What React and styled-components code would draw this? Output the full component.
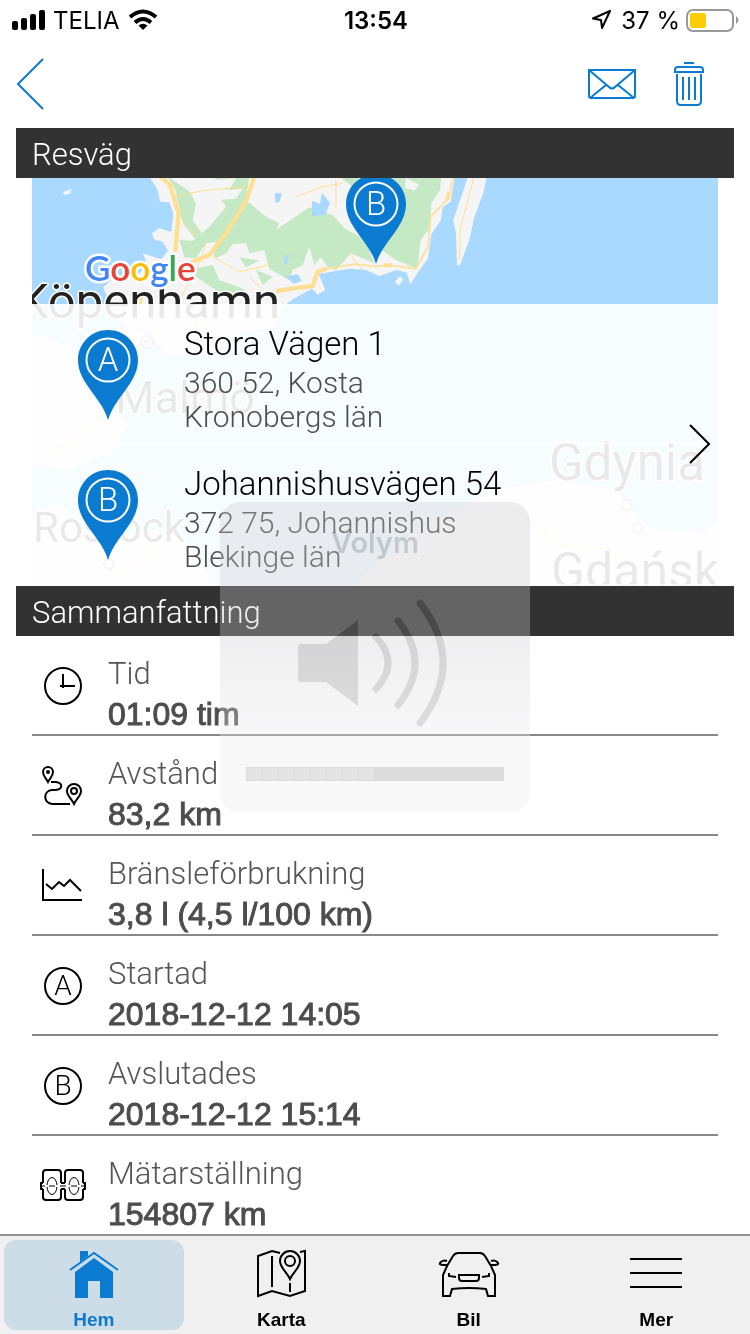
import React from 'react';
import styled, { createGlobalStyle } from 'styled-components';


const BLUE = '#0a7bd1';
const LIGHT_FONT = `Roboto, 'Liberation Sans', sans-serif`;
const MEDIUM_FONT = `'Liberation Sans', Arial, sans-serif`;


const GlobalStyle = createGlobalStyle`
    * {
        box-sizing: border-box;
    }

    body {
        margin: 0;
        background: #fff;
        color: #000;
        font-family: ${LIGHT_FONT};
        font-weight: 300;
    }

    svg {
        display: block;
    }
`;

const Page = styled.div`
    position: relative;
    display: flex;
    flex-direction: column;
    min-height: 100vh;
`;

// STATUS BAR
const StatusBar = styled.div`
    display: grid;
    grid-template-columns: 1fr auto 1fr;
    align-items: center;
    height: 40px;
    padding: 0 10px 0 12px;
    font-family: Inter, sans-serif;
    font-size: 24px;
    font-weight: 400;
`;

const StatusGroup = styled.div`
    display: flex;
    align-items: center;
    justify-content: ${props => props.$end ? 'flex-end' : 'flex-start'};
    gap: ${props => props.$end ? '6px' : '8px'};
`;

const Clock = styled.time`
    font-weight: 600;
`;

// TOOLBAR
const Toolbar = styled.header`
    display: flex;
    align-items: center;
    gap: 36px;
    height: 88px;
    padding: 0 45px 0 16px;
`;

const IconButton = styled.button`
    margin-right: ${props => props.$push ? 'auto' : '0'};
    padding: 0;
    border: 0;
    background: none;
    color: ${BLUE};
`;

// SECTIONS
const Main = styled.main`
    flex: 1;
    padding: 0 16px;
`;

const SectionTitle = styled.h2`
    height: 50px;
    margin: 0;
    padding: 0 16px;
    background: #323232;
    color: #fff;
    font-size: 31px;
    font-weight: 300;
    line-height: 54px;
`;

const MapPanel = styled.div`
    position: relative;
    margin: 0 16px;
    padding-top: 126px;
    overflow: hidden;
`;

const MapDrawing = styled.svg`
    position: absolute;
    top: 0;
    left: 0;
    width: 100%;
    height: 100%;
`;

const RouteLink = styled.a`
    position: relative;
    display: block;
    background: rgba(255, 255, 255, 0.9);
    color: #4d4d4d;
    text-decoration: none;
`;

const RouteArrow = styled.span`
    position: absolute;
    top: 120px;
    right: 8px;
    color: #000;
`;

const Stop = styled.div`
    display: flex;
    gap: 46px;
    height: 140px;
    padding: 26px 46px 0;
    border-bottom: 2px solid rgba(255, 255, 255, 0.6);

    &:last-of-type {
        height: 142px;
    }
`;

const Address = styled.div`
    font-size: 30px;
    line-height: 34px;
`;

const Street = styled.div`
    margin-bottom: 8px;
    color: #000;
    font-size: 33px;
    line-height: 28px;
`;

const SummaryList = styled.ul`
    margin: 0 16px;
    padding: 0;
    list-style: none;
`;

const SummaryItem = styled.li`
    display: flex;
    gap: 14px;
    height: 100px;
    padding-top: 18px;
    border-bottom: 2px solid #888;

    &:last-child {
        height: 98px;
        border-bottom: 0;
    }
`;

const ItemIcon = styled.span`
    width: 62px;
    padding-top: 12px;
    color: #000;
`;

const ItemLabel = styled.div`
    color: #555;
    font-size: 31px;
    line-height: 40px;
`;

const ItemValue = styled.div`
    color: #4d4d4d;
    font-family: ${MEDIUM_FONT};
    font-size: 32px;
    font-weight: 400;
    line-height: 40px;
    -webkit-text-stroke: 1px currentColor;
`;

// TABS
const TabBar = styled.nav`
    display: grid;
    grid-template-columns: repeat(4, 1fr);
    height: 100px;
    padding: 4px 0;
    border-top: 2px solid #939393;
    background: #f0f0f0;
`;

const Tab = styled.a`
    display: flex;
    flex-direction: column;
    align-items: center;
    gap: 12px;
    margin: 0 4px;
    padding-top: 8px;
    border-radius: 12px;
    background: ${props => props.$active ? '#cddde7' : 'transparent'};
    color: ${props => props.$active ? BLUE : '#000'};
    font-family: ${MEDIUM_FONT};
    font-size: 19px;
    font-weight: 700;
    line-height: 20px;
    text-decoration: none;
`;

// VOLUME OVERLAY
const VolumeHud = styled.div`
    position: absolute;
    top: 502px;
    left: 50%;
    display: flex;
    flex-direction: column;
    align-items: center;
    width: 310px;
    height: 310px;
    margin-left: -155px;
    padding: 24px 26px 0;
    border-radius: 20px;
    background: linear-gradient(rgba(202, 202, 206, 0.33) 40%, rgba(234, 234, 238, 0.33) 75%);
    pointer-events: none;
`;

const VolumeTitle = styled.div`
    color: #272420;
    font-family: Inter, sans-serif;
    font-size: 29px;
    font-weight: 600;
    line-height: 34px;
    mix-blend-mode: difference;
`;

const Speaker = styled.svg`
    margin-top: 39px;
    mix-blend-mode: difference;
`;

const VolumeBar = styled.div`
    display: flex;
    width: 100%;
    height: 14px;
    margin-top: 40px;
    padding: 1px;
    background: #dcdcdd;
`;

const VolumeStep = styled.span`
    width: 15px;
    margin-right: 1px;
    background: #e4e4e5;
`;



const Line = ({ width, height, box, stroke = 2, children }) => (
    <svg
        width={width}
        height={height}
        viewBox={box || `0 0 ${width} ${height}`}
        fill="none"
        stroke="currentColor"
        strokeWidth={stroke}
        aria-hidden="true"
    >
        {children}
    </svg>
);

const Letter = ({ x, y, size, color, children }) => (
    <text
        x={x}
        y={y}
        fill={color}
        stroke="none"
        fontFamily="Roboto, sans-serif"
        fontSize={size}
        fontWeight="300"
        textAnchor="middle"
    >
        {children}
    </text>
);

const Pin = ({ letter, ...rest }) => (
    <svg width="60" height="90" viewBox="0 0 60 90" {...rest}>
        <path d="M30 0C13.400 0 0 13.400 0 30c0 9 3.500 16.500 8 23.500C16 66 26 76 30 90c4-14 14-24 22-36.500 4.500-7 8-14.500 8-23.500C60 13.400 46.600 0 30 0Z" fill={BLUE} />
        <circle cx="30" cy="30" r="21.500" fill="none" stroke="#fff" strokeWidth="2" />
        <Letter x="30" y="41" size="33" color="#fff">{letter}</Letter>
    </svg>
);

const LetterIcon = ({ letter }) => (
    <Line width={62} height={40}>
        <circle cx="31" cy="20" r="18" />
        <Letter x="31" y="29" size="28" color="#000">{letter}</Letter>
    </Line>
);


const RouteMap = () => (
    <MapDrawing viewBox="0 0 686 408" preserveAspectRatio="xMidYMin slice" role="img" aria-label="Karta">
        <rect width="686" height="408" fill="#aad9ff" />

        {/* land and roads, drawn at three times the panel's scale */}
        <g transform="translate(-16 -8) scale(0.33333)">
            <path
                fill="#f5f5f5"
                d="M400 20 425 60 432 95 460 97 472 130 466 186 430 175 408 190 414 208 440 215 456 242 436 268
                    380 250 396 285 360 318 300 318 262 352 280 400 330 470 400 480 450 560 600 540 660 490 780 470
                    800 410 830 388 888 356 905 374 928 360 908 312 1000 296 1050 300 1090 318 1142 300 1172 308
                    1183 343 1212 298 1236 265 1246 192 1275 150 1280 112 1304 95 1316 20Z"
            />
            <path fill="#f5f5f5" d="M1356 20 1312 150 1320 190 1323 287 1332 285 1360 210 1375 140 1402 70 1412 20Z" />
            <path fill="#f5f5f5" d="m1136 335 16-16 10 10-14 18ZM140 66l28-9-8 14-14 4ZM270 490l80-20 50 30-30 50-60-10Z" />
            <path fill="#f5f5f5" d="M20 480 190 540 240 700 340 760 280 850 150 900 40 880ZM30 1060 120 1000 200 1050 320 1090 420 1080 520 1120 600 1260 30 1260Z" />
            <path fill="#f5f5f5" d="M1000 1250 1240 1060 1440 960 1620 930 1800 960 1900 1080 2060 1085 2120 1050V1300H1000Z" />
            <path
                fill="#c5e8c5"
                d="M455 20 520 64 540 100 530 150 556 186 540 210 500 160 478 60ZM490 210 530 212 580 170 630 110 596 60
                    600 20 700 20 690 90 750 140 790 160 780 180 880 112 950 135 985 175 1050 210 1075 280 1005 250
                    960 300 935 290 915 262 895 285 880 230 860 285 830 300 820 330 760 296 745 240 700 250 690 220
                    650 222 630 250 600 265 590 250 606 215 570 220 540 265 505 262Z"
            />
            <path fill="#c5e8c5" d="M1130 20 1276 20 1272 60 1246 100 1242 175 1214 210 1204 296 1140 270 1096 240 1120 160ZM970 20l60 0-20 30ZM510 300l80-15 20 45 80 30-60 20-90-60ZM670 262l60 10-40 20ZM720 300l50 20-30 25Z" />
            <path fill="#f5f5f5" d="m1170 24 20 10 20 10-14 18-30-8ZM560 90l40-60 60-6-20 36 40-4-20 30-50 4Z" />
            <path fill="#aad9ff" d="m776 70 22 0-8 26-12 2ZM888 92l24 10 6-34 24 30-14 36-40 4ZM806 260l14-10-6 30-10 2ZM810 320l34-8 14 20-24 10Z" />
            <g fill="none" stroke="#ffdf91" strokeLinejoin="round">
                <path strokeWidth="13" d="M430 16 462 45 488 130 478 245" />
                <path strokeWidth="13" d="M715 20 690 95 630 190 580 255 530 275 500 310M780 364 830 355 890 348 905 305 930 296" />
                <path strokeWidth="5" d="M930 296 1020 282 1080 290 1115 285 1200 296 1236 230 1244 140 1298 85 1312 20" />
                <path strokeWidth="3" d="M480 80 560 62 690 50M500 155l34 40 10-25M590 260l80 45 90-20M840 80l80-30 60-10M570 220l-20 60-60 110M1330 270l2-90 42-160M960 30v80M700 320l60 60M1000 250l40 50" />
                <path strokeWidth="12" d="M1104 286h24M1294 90l6-24" />
                <path strokeWidth="8" d="M380 370 360 460M520 400 560 520M340 560 260 740 100 860M300 1220l120-90M1480 1000l140 120 160 20 60 90" />
            </g>
        </g>

        <g
            fill="#222"
            stroke="#fff"
            strokeWidth="3"
            strokeLinejoin="round"
            paintOrder="stroke"
            fontFamily="Roboto, sans-serif"
            fontWeight="400"
        >
            <text x="248" y="140" fontSize="49" textAnchor="end">Köpenhamn</text>
            <text x="223" y="235" fontSize="45" textAnchor="end">Malmö</text>
            <text x="1" y="364" fontSize="42">Rostock</text>
            <text x="517" y="302" fontSize="51">Gdynia</text>
            <text x="519" y="410" fontSize="50">Gdańsk</text>
        </g>
        <g fill="#fff" stroke="#999" strokeWidth="2">
            <circle cx="115" cy="164" r="6" />
            <circle cx="115" cy="164" r="2" />
            <circle cx="77" cy="386" r="5" />
            <circle cx="595" cy="327" r="5" />
            <circle cx="605" cy="350" r="5" />
        </g>

        <text
            x="53"
            y="103"
            stroke="#fff"
            strokeWidth="5"
            strokeLinejoin="round"
            paintOrder="stroke"
            fontFamily="Lato, sans-serif"
            fontSize="35"
            fontWeight="600"
        >
            <tspan fill="#4285f4">G</tspan>
            <tspan fill="#ea4335">o</tspan>
            <tspan fill="#fbbc05">o</tspan>
            <tspan fill="#4285f4">g</tspan>
            <tspan fill="#34a853">l</tspan>
            <tspan fill="#ea4335">e</tspan>
        </text>
        <Pin letter="B" x="314" y="-4" />
    </MapDrawing>
);


const stops = [
    { letter: 'A', street: 'Stora Vägen 1', city: '360 52, Kosta', county: 'Kronobergs län' },
    { letter: 'B', street: 'Johannishusvägen 54', city: '372 75, Johannishus', county: 'Blekinge län' },
];

const summary = [
    {
        label: 'Tid',
        value: '01:09 tim',
        icon: (
            <Line width={62} height={40}>
                <circle cx="31" cy="20" r="18" />
                <path d="M31 8v14M28 20h15" />
            </Line>
        ),
    },
    {
        label: 'Avstånd',
        value: '83,2 km',
        icon: (
            <Line width={62} height={40}>
                <path d="M16 16c-2-4-5-6-5-10a5 5 0 0 1 10 0c0 4-3 6-5 10Z" />
                <circle cx="16" cy="6" r="1" />
                <path d="M42 38c-2-5-7-8-7-13a7 7 0 0 1 14 0c0 5-5 8-7 13Z" />
                <circle cx="42" cy="25" r="3" />
                <path d="M19 16h5c7 1 7 7 0 8h-4c-9 1-9 12 0 14h18" />
            </Line>
        ),
    },
    {
        label: 'Bränsleförbrukning',
        value: '3,8 l (4,5 l/100 km)',
        icon: (
            <Line width={62} height={40}>
                <path d="M11 3v31h39M14 18l6 5 7-7 5 4 6-6 11 11" />
            </Line>
        ),
    },
    { label: 'Startad', value: '2018-12-12 14:05', icon: <LetterIcon letter="A" /> },
    { label: 'Avslutades', value: '2018-12-12 15:14', icon: <LetterIcon letter="B" /> },
    {
        label: 'Mätarställning',
        value: '154807 km',
        icon: (
            <Line width={62} height={40}>
                <path d="M11 17V7q0-3 3-3h12q3 0 3 3v10M11 23v8q0 3 3 3h12q3 0 3-3v-8M33 17V7q0-3 3-3h12q3 0 3 3v10M33 23v8q0 3 3 3h12q3 0 3-3v-8" />
                <path d="M11 17H9v6h2M29 17h4M29 23h4M51 17h2v6h-2" />
                <g strokeWidth="1">
                    <ellipse cx="20" cy="20" rx="5" ry="8.500" />
                    <ellipse cx="42" cy="20" rx="5" ry="8.500" />
                    <path stroke="#fff" strokeWidth="2" d="M13 20h14M35 20h14" />
                    <path d="M10 20h3M17 20h6M28 20h6M39 20h6M49 20h3" />
                </g>
            </Line>
        ),
    },
];

const tabs = [
    {
        label: 'Hem',
        active: true,
        icon: (
            <svg width="52" height="50" viewBox="0 0 52 50" fill="currentColor" aria-hidden="true">
                <path d="M7 24 26 10l19 14v26H32V33H20v17H7V24Z" />
                <path d="M12 3h8v8l-8 6Z" />
                <path d="M2 23 26 6l24 17" fill="none" stroke="#cddde7" strokeWidth="5" />
                <path d="M2 22 26 5l24 17" fill="none" stroke="currentColor" strokeWidth="2" />
                <path d="M12 3h8v5l-8 6Z" />
            </svg>
        ),
    },
    {
        label: 'Karta',
        icon: (
            <Line width={52} height={50} box="0 -1 52 50">
                <path d="M25 4 17 2 3 7v40l14-5 18 5 15-5V2l-5 1M17 7v31M35 34v9" />
                <path d="M35 30c-3-7-10-11-10-18a10 10 0 0 1 20 0c0 7-7 11-10 18Z" />
                <circle cx="35" cy="12" r="5" />
            </Line>
        ),
    },
    {
        label: 'Bil',
        icon: (
            <Line width={64} height={50} box="0 -1 64 50">
                <path d="M10 17 16 7q2-3 5-3h22q3 0 5 3l6 10 4 9v21h-7l-2-7q-17-2-34 0l-2 7H6V26ZM10 16c-5 0-8 0-7-2s4-3 7-2M54 16c5 0 8 0 7-2s-4-3-7-2" />
                <path d="M22 26h20v3q0 3-3 3H25q-3 0-3-3ZM12 24v3l7 1M52 24v3l-7 1" />
            </Line>
        ),
    },
    {
        label: 'Mer',
        icon: (
            <Line width={52} height={50}>
                <path d="M0 11h52M0 25h52M0 39h52" />
            </Line>
        ),
    },
];



const App = () => {
    return (
        <Page>
            <GlobalStyle />

            <StatusBar>
                <StatusGroup>
                    <svg width="33" height="20" viewBox="0 0 33 20" aria-hidden="true">
                        <rect x="0" y="11" width="6" height="9" rx="2" />
                        <rect x="9" y="8" width="6" height="12" rx="2" />
                        <rect x="18" y="4" width="6" height="16" rx="2" />
                        <rect x="27" y="0" width="6" height="20" rx="2" />
                    </svg>
                    <span>TELIA</span>
                    <svg width="32" height="22" viewBox="2 0 32 22" fill="none" stroke="#000" strokeWidth="4" aria-hidden="true">
                        <path d="M4 8q13-11 26 0M9 13.500q8-7 16 0" />
                        <path d="m17 21-4.500-4.500q4.500-3.500 9 0Z" fill="#000" stroke="none" />
                    </svg>
                </StatusGroup>
                <Clock>13:54</Clock>
                <StatusGroup $end>
                    <Line width={24} height={22}>
                        <path d="M19 2 2 9.500l8 1.500 1 8Z" strokeLinejoin="round" />
                    </Line>
                    <span>37 %</span>
                    <svg width="54" height="24" viewBox="0 0 54 24" aria-hidden="true">
                        <rect x="1" y="2" width="46" height="21" rx="6" fill="none" stroke="#999" strokeWidth="2" />
                        <rect x="4" y="5" width="16" height="15" rx="2" fill="#fc0" />
                        <path d="M50 8q5 4 0 8Z" fill="#999" />
                    </svg>
                </StatusGroup>
            </StatusBar>

            <Toolbar>
                <IconButton type="button" aria-label="Tillbaka" $push>
                    <Line width={28} height={54}>
                        <path d="M27 2 2 27l25 25" />
                    </Line>
                </IconButton>
                <IconButton type="button" aria-label="Skicka">
                    <Line width={50} height={32}>
                        <path d="M2 2h46v26q0 2-2 2H4q-2 0-2-2ZM2 2l20 17q3 3 6 0L48 2M3 30l16-13M47 30 31 17" />
                    </Line>
                </IconButton>
                <IconButton type="button" aria-label="Ta bort">
                    <Line width={32} height={46}>
                        <path d="M11 2h10M2 11V9q0-3 3-3h22q3 0 3 3v2ZM4 13v27q0 4 4 4h16q4 0 4-4V13M10 16v23M16 16v23M22 16v23" />
                    </Line>
                </IconButton>
            </Toolbar>

            <Main>
                <SectionTitle>Resväg</SectionTitle>
                <MapPanel>
                    <RouteMap />
                    <RouteLink href="#karta">
                        {stops.map(stop => (
                            <Stop key={stop.letter}>
                                <Pin letter={stop.letter} />
                                <Address>
                                    <Street>{stop.street}</Street>
                                    <div>{stop.city}</div>
                                    <div>{stop.county}</div>
                                </Address>
                            </Stop>
                        ))}
                        <RouteArrow>
                            <Line width={21} height={40}>
                                <path d="m1 1 19 19L1 39" />
                            </Line>
                        </RouteArrow>
                    </RouteLink>
                </MapPanel>

                <SectionTitle>Sammanfattning</SectionTitle>
                <SummaryList>
                    {summary.map(item => (
                        <SummaryItem key={item.label}>
                            <ItemIcon>{item.icon}</ItemIcon>
                            <div>
                                <ItemLabel>{item.label}</ItemLabel>
                                <ItemValue>{item.value}</ItemValue>
                            </div>
                        </SummaryItem>
                    ))}
                </SummaryList>
            </Main>

            <TabBar>
                {tabs.map(tab => (
                    <Tab key={tab.label} href={`#${tab.label.toLowerCase()}`} $active={tab.active}>
                        {tab.icon}
                        <span>{tab.label}</span>
                    </Tab>
                ))}
            </TabBar>

            <VolumeHud>
                <VolumeTitle>Volym</VolumeTitle>
                <Speaker width="154" height="128" viewBox="0 0 154 128" aria-hidden="true">
                    <path d="M3 45h25l32-24v86L28 83H3q-3 0-3-3V48q0-3 3-3Z" fill="#1b1b1b" />
                    <path
                        d="M78 38q24 26 0 52M100 22q34 42 0 84M122 4q46 60 0 120"
                        fill="none"
                        stroke="#1b1b1b"
                        strokeWidth="7"
                        strokeLinecap="round"
                    />
                </Speaker>
                <VolumeBar role="progressbar" aria-label="Volym" aria-valuenow={8} aria-valuemin={0} aria-valuemax={16}>
                    {Array.from({ length: 8 }, (_, idx) => <VolumeStep key={idx} />)}
                </VolumeBar>
            </VolumeHud>
        </Page>
    );
}



export default App;
